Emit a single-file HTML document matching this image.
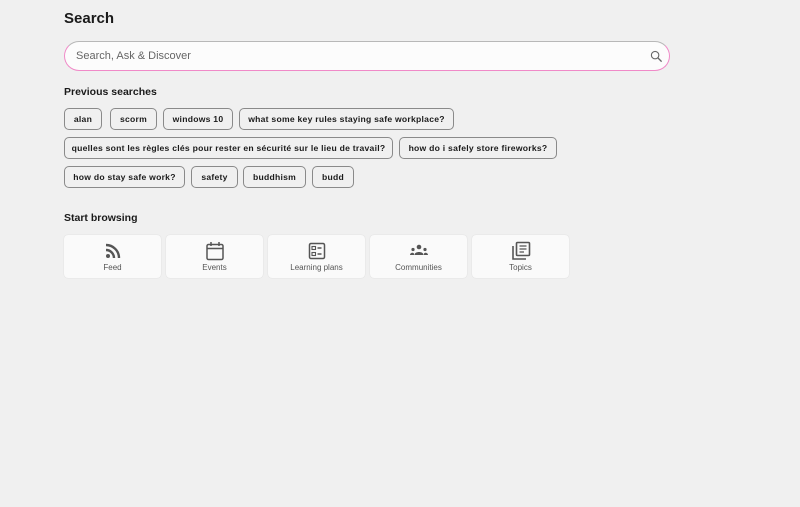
<!DOCTYPE html><html><head><style>
body{margin:0;background:#f0f0f0;font-family:"Liberation Sans",sans-serif;color:#1a1a1a;width:800px;height:507px;overflow:hidden;position:relative}
.a{position:absolute}
h1{position:absolute;left:64px;top:10px;margin:0;font-size:15px;font-weight:bold}
.s{position:absolute;left:64px;top:41px;width:604px;height:28px;border:1px solid #b8b8b8;border-bottom-color:#f08ac8;border-left-color:#f08ac8;border-right-color:#f08ac8;border-radius:15px;background:#fcfcfc;box-sizing:content-box}
.s span{position:absolute;left:11px;top:8px;font-size:11px;color:#666}
.h{position:absolute;left:64px;font-size:10.5px;font-weight:bold}
.c{position:absolute;height:20px;border:1px solid #8a8a8a;border-radius:5px;font-size:8.6px;font-weight:bold;letter-spacing:.25px;line-height:20px;text-align:center;box-sizing:content-box;background:#f0f0f0;white-space:nowrap}
.k{position:absolute;top:235px;width:97px;height:43px;background:#fafafa;border-radius:4px;box-shadow:0 0 1px #ccc}
.k span{position:absolute;left:0;right:0;top:28px;text-align:center;font-size:8px;color:#555}
.k svg{position:absolute;left:39px;top:6px}
</style></head><body>
<h1>Search</h1>
<div class="s"><span>Search, Ask &amp; Discover</span>
<svg class="a" style="left:585px;top:8px" width="13" height="13" viewBox="0 0 14 14"><circle cx="5.5" cy="5.5" r="4" fill="none" stroke="#666" stroke-width="1.2"/><path d="M8.5 8.5L12.5 12.5" stroke="#666" stroke-width="1.4"/></svg></div>
<div class="h" style="top:86px">Previous searches</div>
<div class="c" style="left:64px;top:108px;width:36px">alan</div>
<div class="c" style="left:110px;top:108px;width:45px">scorm</div>
<div class="c" style="left:163px;top:108px;width:68px">windows 10</div>
<div class="c" style="left:239px;top:108px;width:213px">what some key rules staying safe workplace?</div>
<div class="c" style="left:64px;top:137px;width:327px">quelles sont les règles clés pour rester en sécurité sur le lieu de travail?</div>
<div class="c" style="left:399px;top:137px;width:156px">how do i safely store fireworks?</div>
<div class="c" style="left:64px;top:166px;width:119px">how do stay safe work?</div>
<div class="c" style="left:191px;top:166px;width:45px">safety</div>
<div class="c" style="left:243px;top:166px;width:61px">buddhism</div>
<div class="c" style="left:312px;top:166px;width:40px">budd</div>
<div class="h" style="top:212px">Start browsing</div>
<div class="k" style="left:64px"><svg width="20" height="20" viewBox="0 0 20 20"><circle cx="5" cy="15" r="2" fill="#555"/><path d="M3 9a8 8 0 0 1 8 8M3 4a13 13 0 0 1 13 13" fill="none" stroke="#555" stroke-width="2.4"/></svg><span>Feed</span></div>
<div class="k" style="left:166px"><svg width="20" height="20" viewBox="0 0 20 20"><rect x="2" y="3.5" width="16" height="15" rx="1.5" fill="none" stroke="#555" stroke-width="1.5"/><path d="M2 7.5h16M6 1v4M14 1v4" stroke="#555" stroke-width="1.5"/></svg><span>Events</span></div>
<div class="k" style="left:268px"><svg width="20" height="20" viewBox="0 0 20 20"><rect x="2.5" y="2.5" width="15" height="15" rx="1.5" fill="none" stroke="#555" stroke-width="1.5"/><rect x="5" y="5.5" width="3.5" height="3" fill="none" stroke="#555" stroke-width="1.1"/><rect x="5" y="11.5" width="3.5" height="3" fill="none" stroke="#555" stroke-width="1.1"/><path d="M10.5 7h4M10.5 13h4" stroke="#555" stroke-width="1.4"/></svg><span>Learning plans</span></div>
<div class="k" style="left:370px"><svg width="20" height="20" viewBox="0 0 20 20"><circle cx="10" cy="6" r="2.3" fill="#555"/><circle cx="4" cy="8.5" r="1.6" fill="#555"/><circle cx="16" cy="8.5" r="1.6" fill="#555"/><path d="M5.5 14c0-4 9-4 9 0zM1 14c0-3 5-3 4 0zM19 14c0-3-5-3-4 0z" fill="#555"/></svg><span>Communities</span></div>
<div class="k" style="left:472px"><svg width="20" height="20" viewBox="0 0 20 20"><path d="M2 5v13h13" fill="none" stroke="#555" stroke-width="1.6"/><rect x="5.5" y="1.5" width="13" height="13" rx="1" fill="none" stroke="#555" stroke-width="1.6"/><path d="M8.5 5h7M8.5 8h7M8.5 11h4.5" stroke="#555" stroke-width="1.3"/></svg><span>Topics</span></div>
</body></html>
